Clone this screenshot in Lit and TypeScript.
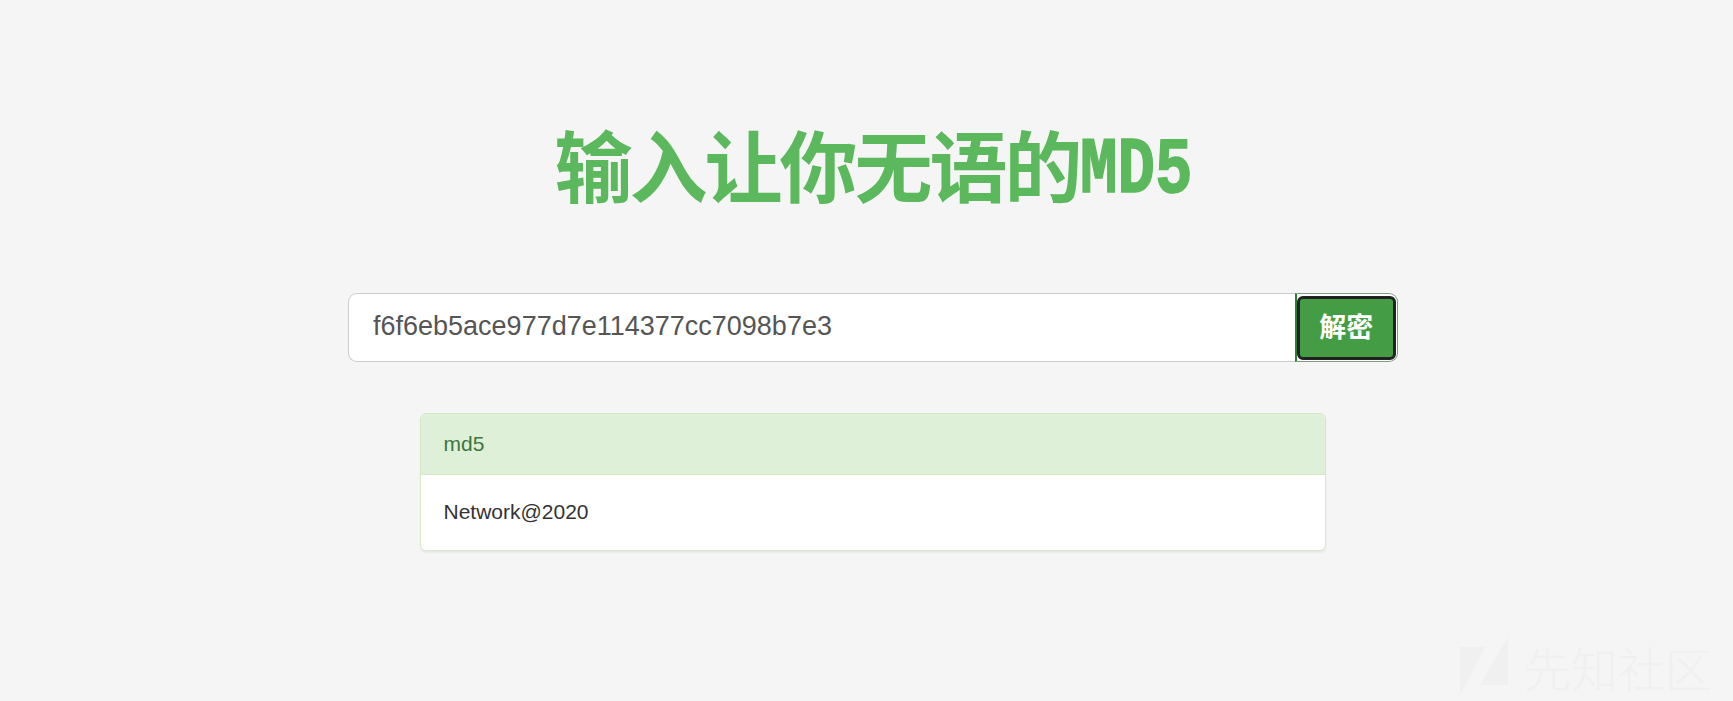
import { LitElement, html, css } from 'lit';
import { customElement } from 'lit/decorators.js';

@customElement('app-root')
export class AppRoot extends LitElement {
  static styles = css`
    :host {
      display: block;
      position: relative;
      height: 701px;
      overflow: hidden;
      background: #f5f5f5;
      font-family: "Liberation Sans", Arial, "Noto Sans CJK SC", sans-serif;
      font-size: 21px;
      color: #333;
    }
    .page {
      display: flex;
      flex-direction: column;
      align-items: center;
      padding: 122px 0 0 13px;
    }
    h1 {
      display: flex;
      align-items: baseline;
      height: 82.5px;
      margin: 0 0 88.5px;
      font-family: "Noto Sans CJK SC", sans-serif;
      font-size: 78px;
      font-weight: 700;
      letter-spacing: -3px;
      line-height: 82.5px;
      color: #5cb85c;
      white-space: nowrap;
    }
    /* half-width latin, as the heading font in the original has */
    h1 span {
      display: inline-block;
      width: 112px;
      font-family: "Liberation Mono", monospace;
      font-size: 80px;
      letter-spacing: 0;
      -webkit-text-stroke: 1.5px #5cb85c;
      transform: translateY(-5px) scaleX(0.78);
      transform-origin: left;
    }
    .input-group {
      display: flex;
      width: 1050px;
      height: 69px;
      margin-bottom: 51px;
    }
    input {
      flex: 1;
      min-width: 0;
      box-sizing: border-box;
      height: 69px;
      padding: 0 24px 2px;
      border: 1.5px solid #ccc;
      border-right: 0;
      border-radius: 9px 0 0 9px;
      background: #fff;
      color: #555;
      font: 27px "Liberation Sans", Arial, sans-serif;
      outline: none;
    }
    button {
      box-sizing: border-box;
      width: 103px;
      height: 69px;
      padding: 1.5px 1.5px 1.5px 0;
      border: 1px solid #7f9f7f;
      border-left: 2.5px solid #2f7d32;
      border-radius: 0 9px 9px 0;
      background: #fff;
    }
    button span {
      box-sizing: border-box;
      display: flex;
      align-items: center;
      justify-content: center;
      height: 100%;
      padding-bottom: 4px;
      border: 3px solid #222;
      border-radius: 6px;
      background: #449d44;
      color: #fff;
      font-family: "Noto Sans CJK SC", sans-serif;
      font-size: 27px;
      font-weight: 700;
    }
    .panel {
      box-sizing: border-box;
      width: 906px;
      border: 1.5px solid #d6e9c6;
      border-radius: 6px;
      background: #fff;
      box-shadow: 0 1.5px 1.5px rgba(0, 0, 0, 0.05);
    }
    .panel-heading {
      padding: 15px 22.5px;
      border-bottom: 1.5px solid #d6e9c6;
      border-radius: 4.5px 4.5px 0 0;
      background: #dff0d8;
      color: #3c763d;
      line-height: 30px;
    }
    .panel-body {
      padding: 21.5px 22.5px 23.5px;
      line-height: 30px;
    }
    .watermark {
      position: absolute;
      left: 1460px;
      top: 637px;
      display: flex;
      align-items: center;
      gap: 15px;
      color: #f0f0f0;
      font-family: "Noto Sans CJK SC", sans-serif;
      font-size: 47px;
      font-weight: 300;
      line-height: 60px;
    }
    .watermark svg {
      display: block;
    }
  `;

  render() {
    return html`
      <div class="page">
        <h1>输入让你无语的<span>MD5</span></h1>
        <div class="input-group">
          <input type="text" .value=${'f6f6eb5ace977d7e114377cc7098b7e3'} />
          <button type="button"><span>解密</span></button>
        </div>
        <div class="panel">
          <div class="panel-heading">md5</div>
          <div class="panel-body">Network@2020</div>
        </div>
      </div>
      <div class="watermark">
        <svg width="49" height="60" viewBox="0 0 49 60" fill="#f0f0f0">
          <path d="M0 10H25L0 58z" />
          <path d="M48 0V48H20z" />
        </svg>
        <span>先知社区</span>
      </div>
    `;
  }
}
